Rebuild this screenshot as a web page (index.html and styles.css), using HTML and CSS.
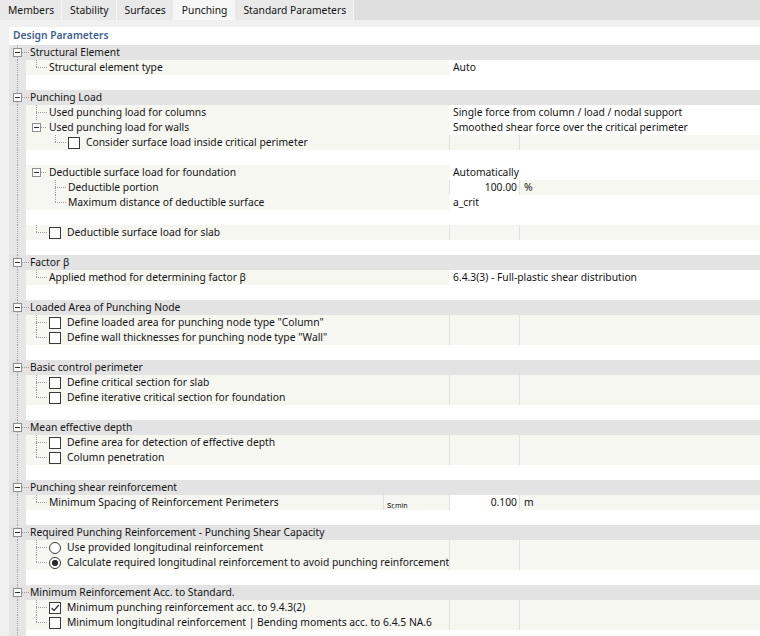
FILE: index.html
```html
<!DOCTYPE html>
<html>
<head>
<meta charset="utf-8">
<link rel="stylesheet" href="styles.css">
</head>
<body>
<div class="tabs">
  <div class="tab">Members</div>
  <div class="tab">Stability</div>
  <div class="tab">Surfaces</div>
  <div class="tab active">Punching</div>
  <div class="tab">Standard Parameters</div>
</div>
<div class="panel">
  <div class="title">Design Parameters</div>
  <div class="tree">
    <div class="row hdr"><span class="exp"></span><span class="stub"></span><span class="htxt">Structural Element</span></div>
    <div class="row"><span class="gut"></span><span class="lab l1"><span class="tee"></span>Structural element type</span><span class="wide">Auto</span></div>
    <div class="row empty"><span class="gut"></span><span class="blank"></span></div>

    <div class="row hdr"><span class="exp"></span><span class="stub"></span><span class="htxt">Punching Load</span></div>
    <div class="row"><span class="gut"></span><span class="lab l1"><span class="tee mid"></span>Used punching load for columns</span><span class="wide">Single force from column / load / nodal support</span></div>
    <div class="row"><span class="gut"></span><span class="lab l1b"><span class="exp"></span><span class="stub2"></span>Used punching load for walls</span><span class="wide">Smoothed shear force over the critical perimeter</span></div>
    <div class="row"><span class="gut"></span><span class="lab l2"><span class="tee"></span><span class="cb"></span>Consider surface load inside critical perimeter</span><span class="val"></span><span class="unit"></span></div>
    <div class="row empty"><span class="gut"></span><span class="blank"></span></div>
    <div class="row"><span class="gut"></span><span class="lab l1b"><span class="exp"></span><span class="stub2"></span>Deductible surface load for foundation</span><span class="wide">Automatically</span></div>
    <div class="row"><span class="gut"></span><span class="lab l2"><span class="tee mid"></span>Deductible portion</span><span class="val num">100.00</span><span class="unit">%</span></div>
    <div class="row"><span class="gut"></span><span class="lab l2"><span class="tee"></span>Maximum distance of deductible surface</span><span class="wide">a_crit</span></div>
    <div class="row empty"><span class="gut"></span><span class="blank"></span></div>
    <div class="row"><span class="gut"></span><span class="lab l1"><span class="tee"></span><span class="cb"></span>Deductible surface load for slab</span><span class="val"></span><span class="unit"></span></div>
    <div class="row empty"><span class="gut"></span><span class="blank"></span></div>

    <div class="row hdr"><span class="exp"></span><span class="stub"></span><span class="htxt">Factor β</span></div>
    <div class="row"><span class="gut"></span><span class="lab l1"><span class="tee"></span>Applied method for determining factor β</span><span class="wide">6.4.3(3) - Full-plastic shear distribution</span></div>
    <div class="row empty"><span class="gut"></span><span class="blank"></span></div>

    <div class="row hdr"><span class="exp"></span><span class="stub"></span><span class="htxt">Loaded Area of Punching Node</span></div>
    <div class="row"><span class="gut"></span><span class="lab l1"><span class="tee mid"></span><span class="cb"></span>Define loaded area for punching node type "Column"</span><span class="val"></span><span class="unit"></span></div>
    <div class="row"><span class="gut"></span><span class="lab l1"><span class="tee"></span><span class="cb"></span>Define wall thicknesses for punching node type "Wall"</span><span class="val"></span><span class="unit"></span></div>
    <div class="row empty"><span class="gut"></span><span class="blank"></span></div>

    <div class="row hdr"><span class="exp"></span><span class="stub"></span><span class="htxt">Basic control perimeter</span></div>
    <div class="row"><span class="gut"></span><span class="lab l1"><span class="tee mid"></span><span class="cb"></span>Define critical section for slab</span><span class="val"></span><span class="unit"></span></div>
    <div class="row"><span class="gut"></span><span class="lab l1"><span class="tee"></span><span class="cb"></span>Define iterative critical section for foundation</span><span class="val"></span><span class="unit"></span></div>
    <div class="row empty"><span class="gut"></span><span class="blank"></span></div>

    <div class="row hdr"><span class="exp"></span><span class="stub"></span><span class="htxt">Mean effective depth</span></div>
    <div class="row"><span class="gut"></span><span class="lab l1"><span class="tee mid"></span><span class="cb"></span>Define area for detection of effective depth</span><span class="val"></span><span class="unit"></span></div>
    <div class="row"><span class="gut"></span><span class="lab l1"><span class="tee"></span><span class="cb"></span>Column penetration</span><span class="val"></span><span class="unit"></span></div>
    <div class="row empty"><span class="gut"></span><span class="blank"></span></div>

    <div class="row hdr"><span class="exp"></span><span class="stub"></span><span class="htxt">Punching shear reinforcement</span></div>
    <div class="row"><span class="gut"></span><span class="lab l1 short"><span class="tee"></span>Minimum Spacing of Reinforcement Perimeters</span><span class="sym"><span class="sym-s">s</span><span class="sym-i">r,min</span></span><span class="val num">0.100</span><span class="unit">m</span></div>
    <div class="row empty"><span class="gut"></span><span class="blank"></span></div>

    <div class="row hdr"><span class="exp"></span><span class="stub"></span><span class="htxt">Required Punching Reinforcement - Punching Shear Capacity</span></div>
    <div class="row"><span class="gut"></span><span class="lab l1"><span class="tee mid"></span><span class="rb"></span>Use provided longitudinal reinforcement</span><span class="val"></span><span class="unit"></span></div>
    <div class="row"><span class="gut"></span><span class="lab l1"><span class="tee"></span><span class="rb on"></span>Calculate required longitudinal reinforcement to avoid punching reinforcement</span><span class="val"></span><span class="unit"></span></div>
    <div class="row empty"><span class="gut"></span><span class="blank"></span></div>

    <div class="row hdr"><span class="exp"></span><span class="stub"></span><span class="htxt">Minimum Reinforcement Acc. to Standard.</span></div>
    <div class="row"><span class="gut"></span><span class="lab l1"><span class="tee mid"></span><span class="cb"><svg width="10" height="10" viewBox="0 0 10 10"><polyline points="1.5,5 4,7.5 8.8,2" fill="none" stroke="#333" stroke-width="1.2"/></svg></span>Minimum punching reinforcement acc. to 9.4.3(2)</span><span class="val"></span><span class="unit"></span></div>
    <div class="row"><span class="gut"></span><span class="lab l1"><span class="tee"></span><span class="cb"></span>Minimum longitudinal reinforcement | Bending moments acc. to 6.4.5 NA.6</span><span class="val"></span><span class="unit"></span></div>
    <div class="row empty"><span class="gut"></span><span class="blank"></span></div>
  </div>
</div>
</body>
</html>
```
FILE: styles.css
```css
html, body {
  margin: 0;
  padding: 0;
  background: #f0f0f0;
  font-family: "Noto Sans", "Open Sans", sans-serif;
  font-size: 10.3px;
  color: #141414;
  overflow: hidden;
}

.tabs {
  display: flex;
  height: 20px;
  background: #dedede;
}
.tab {
  padding: 0 7px 0 8px;
  line-height: 20px;
  background: #e9e9e9;
  border-right: 1px solid #f6f6f6;
  white-space: nowrap;
}
.tab.active {
  background: #f6f6f6;
}

.panel {
  margin-top: 7px;
  margin-left: 9px;
  background: #fff;
}
.title {
  height: 18px;
  line-height: 17px;
  padding-left: 4px;
  color: #3f6190;
  font-weight: 600;
}

.row {
  display: flex;
  height: 15px;
  line-height: 15px;
  white-space: nowrap;
  align-items: center;
}

.gut {
  width: 17px;
  height: 15px;
  flex: none;
  background-color: #e6e6e6;
  background-image: repeating-linear-gradient(to bottom, #a4a4a4 0 1px, transparent 1px 2px);
  background-size: 1px 15px;
  background-position: 8px 0;
  background-repeat: no-repeat;
}

.hdr {
  background-color: #e3e3e3;
  background-image: repeating-linear-gradient(to bottom, #a4a4a4 0 1px, transparent 1px 2px);
  background-size: 1px 15px;
  background-position: 8px 0;
  background-repeat: no-repeat;
  padding-left: 4px;
}
.htxt {
  margin-left: 1px;
}

.exp {
  width: 9px;
  height: 9px;
  box-sizing: border-box;
  flex: none;
  border: 1px solid #8e8e8e;
  background: linear-gradient(#2e2e2e, #2e2e2e) center / 5px 1px no-repeat, #fff;
}
.stub {
  width: 7px;
  height: 1px;
  flex: none;
  background: repeating-linear-gradient(to right, #9c9c9c 0 1px, transparent 1px 2px);
}
.stub2 {
  width: 6px;
  height: 1px;
  flex: none;
  margin-right: 2px;
  background: repeating-linear-gradient(to right, #9c9c9c 0 1px, transparent 1px 2px);
}

.lab {
  width: 423px;
  height: 15px;
  flex: none;
  box-sizing: border-box;
  display: flex;
  align-items: center;
  background: #f7f7f2;
  overflow: hidden;
}
.lab.short {
  width: 357px;
}
.l1 { padding-left: 10px; }
.l1b { padding-left: 6px; }
.l2 { padding-left: 29px; }

.tee {
  width: 13px;
  height: 15px;
  flex: none;
  background-image:
    repeating-linear-gradient(to bottom, #9c9c9c 0 1px, transparent 1px 2px),
    repeating-linear-gradient(to right, #9c9c9c 0 1px, transparent 1px 2px);
  background-size: 1px 8px, 11px 1px;
  background-position: 0 0, 0 7px;
  background-repeat: no-repeat;
}
.tee.mid {
  background-size: 1px 15px, 11px 1px;
}

.cb, .rb {
  width: 12px;
  height: 12px;
  flex: none;
  box-sizing: border-box;
  border: 1px solid #3a3a3a;
  background: #fff;
  margin-right: 6px;
  display: flex;
  align-items: center;
  justify-content: center;
}
.rb {
  border-radius: 50%;
}
.rb.on {
  background: radial-gradient(circle, #2e2e2e 0 2.8px, #fff 3.4px);
}

.val {
  width: 70px;
  height: 15px;
  flex: none;
  box-sizing: border-box;
  border-left: 1px solid #e2e2e2;
  background: #f7f7f2;
}
.val.num {
  background: #fff;
  text-align: right;
  padding-right: 2px;
}
.unit {
  flex: 1;
  height: 15px;
  border-left: 1px solid #e2e2e2;
  background: #f7f7f2;
  padding-left: 4px;
}
.wide {
  flex: 1;
  height: 15px;
  background: #fff;
  padding-left: 4px;
}
.sym {
  width: 66px;
  height: 15px;
  flex: none;
  box-sizing: border-box;
  border-left: 1px solid #e2e2e2;
  background: #f7f7f2;
  padding-left: 3px;
  padding-top: 2px;
  line-height: 14px;
}
.sym-s {
  font-size: 9px;
}
.sym-i {
  font-size: 7px;
}

.blank {
  flex: 1;
  height: 15px;
  background: #fff;
}
```
